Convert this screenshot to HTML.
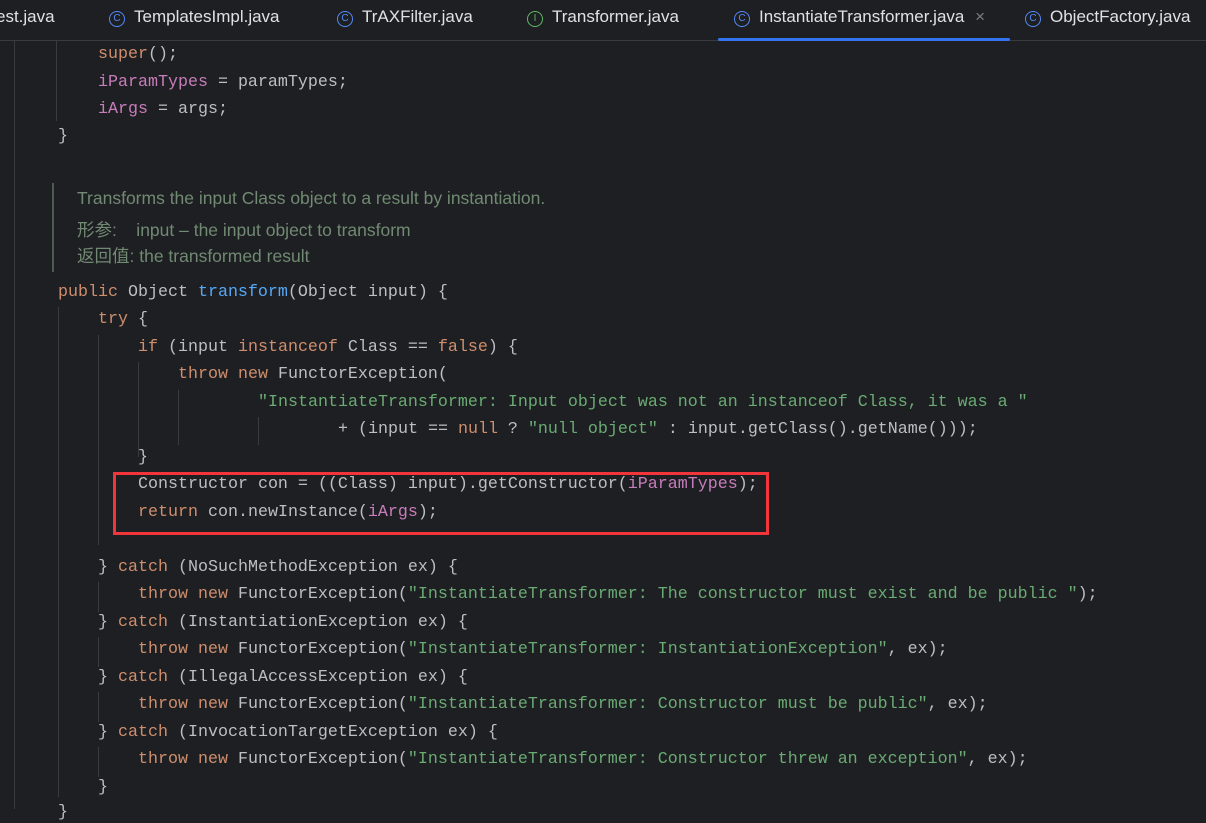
<!DOCTYPE html>
<html><head><meta charset="utf-8"><style>
body{margin:0;width:1206px;height:809px;background:#1e1f22;overflow:hidden;position:relative;font-family:"Liberation Sans","Noto Sans CJK SC",sans-serif}
.tabs{position:absolute;left:0;top:0;width:1206px;height:40px;border-bottom:1px solid #393b40;background:#1e1f22}
.tab{position:absolute;top:7px;font-size:17px;color:#dfe1e5;white-space:nowrap}
.ic{display:inline-block;width:14px;height:14px;border:1.5px solid #548af7;border-radius:50%;color:#548af7;font-size:10px;line-height:14px;text-align:center;vertical-align:1px;margin-right:9px;box-sizing:content-box}
.ic.gr{border-color:#5fb865;color:#5fb865}
.ul{position:absolute;left:718px;top:38px;width:292px;height:3px;background:#3574f0;border-radius:2px}
.code{position:absolute;left:0;top:0;font-family:"Liberation Mono",monospace;font-size:16.67px;color:#bcbec4;white-space:pre}
.l{position:absolute;left:0;height:20px;line-height:20px}
.k{color:#cf8e6d}.f{color:#c77dbb}.m{color:#56a8f5}.s{color:#6aab73}
.g{position:absolute;width:1px;background:#393b40}
.doc{position:absolute;left:52px;top:183px;height:89px;border-left:2px solid #4b5b4d}
.dt{position:absolute;left:77px;font-size:17.5px;color:#718a73;white-space:nowrap}
.box{position:absolute;left:113px;top:472px;width:650px;height:57px;border:3px solid #f2353a}
</style></head><body>
<div class="tabs">
<div class="tab" style="left:-4px">est.java</div>
<div class="tab" style="left:109px"><span class="ic">C</span>TemplatesImpl.java</div>
<div class="tab" style="left:337px"><span class="ic">C</span>TrAXFilter.java</div>
<div class="tab" style="left:527px"><span class="ic gr">I</span>Transformer.java</div>
<div class="tab" style="left:734px"><span class="ic">C</span>InstantiateTransformer.java <span style="color:#7a7e85;margin-left:6px">×</span></div>
<div class="tab" style="left:1025px"><span class="ic">C</span>ObjectFactory.java</div>
<div class="ul"></div>
</div>
<div class="g" style="left:14px;top:41px;height:768px"></div>
<div class="g" style="left:56px;top:41px;height:80px"></div>
<div class="g" style="left:58px;top:307px;height:490px"></div>
<div class="g" style="left:98px;top:335px;height:210px"></div>
<div class="g" style="left:138px;top:362px;height:95px"></div>
<div class="g" style="left:178px;top:390px;height:55px"></div>
<div class="g" style="left:258px;top:417px;height:28px"></div>
<div class="g" style="left:98px;top:582px;height:30px"></div>
<div class="g" style="left:98px;top:637px;height:30px"></div>
<div class="g" style="left:98px;top:692px;height:30px"></div>
<div class="g" style="left:98px;top:747px;height:30px"></div>
<div class="doc"></div>
<div class="dt" style="top:188px">Transforms the input Class object to a result by instantiation.</div>
<div class="dt" style="top:217px">形参:&nbsp;&nbsp;&nbsp;&nbsp;input – the input object to transform</div>
<div class="dt" style="top:243px">返回值: the transformed result</div>
<div class="code">
<div class="l" style="top:45px;left:98px"><span class="k">super</span>();</div>
<div class="l" style="top:73px;left:98px"><span class="f">iParamTypes</span> = paramTypes;</div>
<div class="l" style="top:100px;left:98px"><span class="f">iArgs</span> = args;</div>
<div class="l" style="top:127px;left:58px">}</div>
<div class="l" style="top:283px;left:58px"><span class="k">public</span> Object <span class="m">transform</span>(Object input) {</div>
<div class="l" style="top:310px;left:98px"><span class="k">try</span> {</div>
<div class="l" style="top:338px;left:138px"><span class="k">if</span> (input <span class="k">instanceof</span> Class == <span class="k">false</span>) {</div>
<div class="l" style="top:365px;left:178px"><span class="k">throw new</span> FunctorException(</div>
<div class="l" style="top:393px;left:258px"><span class="s">"InstantiateTransformer: Input object was not an instanceof Class, it was a "</span></div>
<div class="l" style="top:420px;left:338px">+ (input == <span class="k">null</span> ? <span class="s">"null object"</span> : input.getClass().getName()));</div>
<div class="l" style="top:448px;left:138px">}</div>
<div class="l" style="top:475px;left:138px">Constructor con = ((Class) input).getConstructor(<span class="f">iParamTypes</span>);</div>
<div class="l" style="top:503px;left:138px"><span class="k">return</span> con.newInstance(<span class="f">iArgs</span>);</div>
<div class="l" style="top:558px;left:98px">} <span class="k">catch</span> (NoSuchMethodException ex) {</div>
<div class="l" style="top:585px;left:138px"><span class="k">throw new</span> FunctorException(<span class="s">"InstantiateTransformer: The constructor must exist and be public "</span>);</div>
<div class="l" style="top:613px;left:98px">} <span class="k">catch</span> (InstantiationException ex) {</div>
<div class="l" style="top:640px;left:138px"><span class="k">throw new</span> FunctorException(<span class="s">"InstantiateTransformer: InstantiationException"</span>, ex);</div>
<div class="l" style="top:668px;left:98px">} <span class="k">catch</span> (IllegalAccessException ex) {</div>
<div class="l" style="top:695px;left:138px"><span class="k">throw new</span> FunctorException(<span class="s">"InstantiateTransformer: Constructor must be public"</span>, ex);</div>
<div class="l" style="top:723px;left:98px">} <span class="k">catch</span> (InvocationTargetException ex) {</div>
<div class="l" style="top:750px;left:138px"><span class="k">throw new</span> FunctorException(<span class="s">"InstantiateTransformer: Constructor threw an exception"</span>, ex);</div>
<div class="l" style="top:778px;left:98px">}</div>
<div class="l" style="top:803px;left:58px">}</div>
</div>
<div class="box"></div>
</body></html>
